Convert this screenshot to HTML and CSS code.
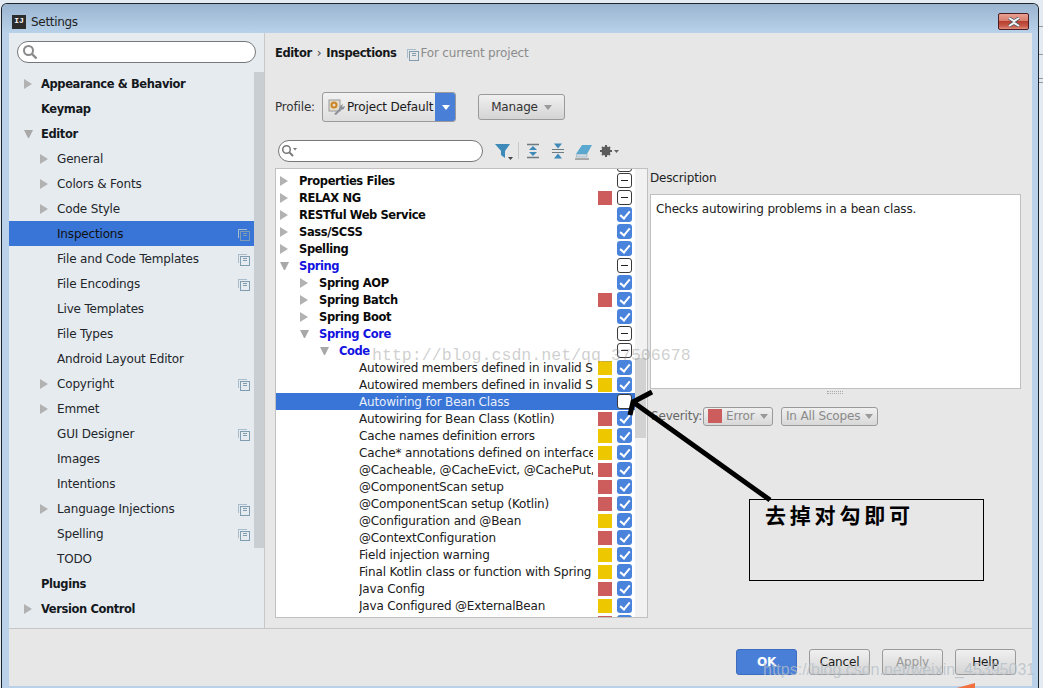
FILE: index.html
```html
<!DOCTYPE html>
<html lang="en">
<head>
  <meta charset="UTF-8">
  <meta name="viewport" content="width=device-width, initial-scale=1.0">
  <title>Settings</title>
  <link rel="stylesheet" href="styles.css">
</head>
<body>
  <div class="window">
    <div class="titlebar">
      <span class="app-icon">IJ</span>
      <span class="title">Settings</span>
      <span class="close"><svg width="14" height="10" viewBox="0 0 14 10"><path d="M2 1l5 3.200L12 1M2 9l5-3.200L12 9" fill="none" stroke="#4a5660" stroke-width="3.400"/><path d="M2 1l5 3.200L12 1M2 9l5-3.200L12 9" fill="none" stroke="#f2f4f6" stroke-width="2"/></svg></span>
    </div>
    <div class="main">
      <aside class="sidebar">
        <div class="side-search">
          <svg class="mag" width="16" height="16" viewBox="0 0 16 16"><circle cx="6.500" cy="6.500" r="4.500" fill="none" stroke="#8a8a8a" stroke-width="2"/><path d="M10 10l4.500 4.500" stroke="#8a8a8a" stroke-width="2.400"/></svg>
        </div>
        <div class="side-body">
          <ul class="nav">
            <li class="nav-row top"><i class="arr right"></i>Appearance &amp; Behavior</li>
            <li class="nav-row top"><i class="arr none"></i>Keymap</li>
            <li class="nav-row top"><i class="arr down"></i>Editor</li>
            <li class="nav-row sub"><i class="arr right"></i>General</li>
            <li class="nav-row sub"><i class="arr right"></i>Colors &amp; Fonts</li>
            <li class="nav-row sub"><i class="arr right"></i>Code Style</li>
            <li class="nav-row sub selected"><i class="arr none"></i>Inspections<i class="copy"></i></li>
            <li class="nav-row sub"><i class="arr none"></i>File and Code Templates<i class="copy"></i></li>
            <li class="nav-row sub"><i class="arr none"></i>File Encodings<i class="copy"></i></li>
            <li class="nav-row sub"><i class="arr none"></i>Live Templates</li>
            <li class="nav-row sub"><i class="arr none"></i>File Types</li>
            <li class="nav-row sub"><i class="arr none"></i>Android Layout Editor</li>
            <li class="nav-row sub"><i class="arr right"></i>Copyright<i class="copy"></i></li>
            <li class="nav-row sub"><i class="arr right"></i>Emmet</li>
            <li class="nav-row sub"><i class="arr none"></i>GUI Designer<i class="copy"></i></li>
            <li class="nav-row sub"><i class="arr none"></i>Images</li>
            <li class="nav-row sub"><i class="arr none"></i>Intentions</li>
            <li class="nav-row sub"><i class="arr right"></i>Language Injections<i class="copy"></i></li>
            <li class="nav-row sub"><i class="arr none"></i>Spelling<i class="copy"></i></li>
            <li class="nav-row sub"><i class="arr none"></i>TODO</li>
            <li class="nav-row top"><i class="arr none"></i>Plugins</li>
            <li class="nav-row top"><i class="arr right"></i>Version Control</li>
          </ul>
          <div class="side-scroll"><div class="side-thumb"></div></div>
        </div>
      </aside>
      <section class="content">
        <div class="crumbs"><b>Editor</b><span class="sep">&rsaquo;</span><b>Inspections</b><i class="copy"></i><span class="scope">For current project</span></div>
        <div class="profile-row">
          <span class="profile-label">Profile:</span>
          <div class="profile-select">
            <svg width="18" height="18" viewBox="0 0 18 18"><rect x="1" y="2" width="11" height="11" fill="#e4dccc" stroke="#9a9a9a"/><circle cx="6" cy="7" r="2.500" fill="none" stroke="#cc8420" stroke-width="2"/><path d="M6 16l5-5 1-3 3-2-1 3 3-1-1 3-3 1-5 5z" fill="#8c9298"/></svg>
            <span class="profile-name">Project Default</span>
            <span class="profile-drop"><i class="tri white"></i></span>
          </div>
          <button class="btn manage">Manage<i class="tri gray"></i></button>
        </div>
        <div class="toolbar">
          <div class="insp-search">
            <svg width="16" height="14" viewBox="0 0 16 14"><circle cx="5.500" cy="5.500" r="3.800" fill="none" stroke="#777" stroke-width="1.500"/><path d="M8.400 8.400l3.600 3.600" stroke="#777" stroke-width="2"/><path d="M12 4h4l-2 2.500z" fill="#777"/></svg>
          </div>
          <svg class="tools" width="128" height="20" viewBox="0 0 128 20">
            <path d="M1 3h15l-5 7v7l-4-3v-4z" fill="#3d8ab8"/><path d="M14 16h5l-2.500 3z" fill="#444"/>
            <path d="M24.500 1v17" stroke="#c8c8c8"/>
            <path d="M33 3.500h12M33 16.500h12" stroke="#6a7a80" stroke-width="1.500"/><path d="M39 5l4 4h-8zM39 15l4-4h-8z" fill="#3d8ab8"/>
            <path d="M58 8.500h12M58 11.500h12" stroke="#6a7a80"/><path d="M64 7.500l4-5h-8zM64 12.500l4 5h-8z" fill="#3d8ab8"/>
            <path d="M82 13l6-9h10l-5 9z" fill="#5aa8d0"/><path d="M83 13h10v3H82z" fill="#d0dde4" stroke="#7a9cb0" stroke-width=".5"/><path d="M81 18h14" stroke="#666"/>
            <circle cx="112" cy="10" r="3" fill="none" stroke="#5c5c5c" stroke-width="3"/><path d="M112 4v12M106 10h12M108 6l8 8M116 6l-8 8" stroke="#5c5c5c" stroke-width="2"/><path d="M120 9h5l-2.500 3z" fill="#666"/>
          </svg>
        </div>
        <div class="panes">
          <div class="tree-box">
            <div class="tree-clip">
              <div class="tree-stub"><span class="spacer"></span><span class="box mixed"></span></div>
              <div class="t-row group l0"><i class="arr right"></i><span class="t-name">Properties Files</span><span class="sev"></span><span class="box mixed"></span></div>
              <div class="t-row group l0"><i class="arr right"></i><span class="t-name">RELAX NG</span><span class="sev red"></span><span class="box mixed"></span></div>
              <div class="t-row group l0"><i class="arr right"></i><span class="t-name">RESTful Web Service</span><span class="sev"></span><span class="box on"></span></div>
              <div class="t-row group l0"><i class="arr right"></i><span class="t-name">Sass/SCSS</span><span class="sev"></span><span class="box on"></span></div>
              <div class="t-row group l0"><i class="arr right"></i><span class="t-name">Spelling</span><span class="sev"></span><span class="box on"></span></div>
              <div class="t-row group l0 link"><i class="arr down"></i><span class="t-name">Spring</span><span class="sev"></span><span class="box mixed"></span></div>
              <div class="t-row group l1"><i class="arr right"></i><span class="t-name">Spring AOP</span><span class="sev"></span><span class="box on"></span></div>
              <div class="t-row group l1"><i class="arr right"></i><span class="t-name">Spring Batch</span><span class="sev red"></span><span class="box on"></span></div>
              <div class="t-row group l1"><i class="arr right"></i><span class="t-name">Spring Boot</span><span class="sev"></span><span class="box on"></span></div>
              <div class="t-row group l1 link"><i class="arr down"></i><span class="t-name">Spring Core</span><span class="sev"></span><span class="box mixed"></span></div>
              <div class="t-row group l2 link"><i class="arr down"></i><span class="t-name">Code</span><span class="sev"></span><span class="box mixed"></span></div>
              <div class="t-row l3"><span class="t-name">Autowired members defined in invalid Spring Bean</span><span class="sev yellow"></span><span class="box on"></span></div>
              <div class="t-row l3"><span class="t-name">Autowired members defined in invalid Spring Bean</span><span class="sev yellow"></span><span class="box on"></span></div>
              <div class="t-row l3 picked"><span class="t-name">Autowiring for Bean Class</span><span class="sev"></span><span class="box off"></span></div>
              <div class="t-row l3"><span class="t-name">Autowiring for Bean Class (Kotlin)</span><span class="sev red"></span><span class="box on"></span></div>
              <div class="t-row l3"><span class="t-name">Cache names definition errors</span><span class="sev yellow"></span><span class="box on"></span></div>
              <div class="t-row l3"><span class="t-name">Cache* annotations defined on interfaces and methods</span><span class="sev yellow"></span><span class="box on"></span></div>
              <div class="t-row l3"><span class="t-name">@Cacheable, @CacheEvict, @CachePut, @Caching</span><span class="sev red"></span><span class="box on"></span></div>
              <div class="t-row l3"><span class="t-name">@ComponentScan setup</span><span class="sev red"></span><span class="box on"></span></div>
              <div class="t-row l3"><span class="t-name">@ComponentScan setup (Kotlin)</span><span class="sev red"></span><span class="box on"></span></div>
              <div class="t-row l3"><span class="t-name">@Configuration and @Bean</span><span class="sev yellow"></span><span class="box on"></span></div>
              <div class="t-row l3"><span class="t-name">@ContextConfiguration</span><span class="sev red"></span><span class="box on"></span></div>
              <div class="t-row l3"><span class="t-name">Field injection warning</span><span class="sev yellow"></span><span class="box on"></span></div>
              <div class="t-row l3"><span class="t-name">Final Kotlin class or function with Spring</span><span class="sev yellow"></span><span class="box on"></span></div>
              <div class="t-row l3"><span class="t-name">Java Config</span><span class="sev red"></span><span class="box on"></span></div>
              <div class="t-row l3"><span class="t-name">Java Configured @ExternalBean</span><span class="sev yellow"></span><span class="box on"></span></div>
              <div class="t-row l3"><span class="t-name"></span><span class="sev red"></span><span class="box on"></span></div>
            </div>
            <div class="tree-scroll"><div class="tree-thumb"></div></div>
          </div>
          <div class="details">
            <div class="desc-label">Description</div>
            <div class="desc-box">Checks autowiring problems in a bean class.</div>
            <div class="grip"></div>
            <div class="severity-row">
              <span class="sev-label">Severity:</span>
              <span class="combo combo-error"><i class="sev-chip"></i>Error<i class="tri gray"></i></span>
              <span class="combo combo-scope">In All Scopes<i class="tri gray"></i></span>
            </div>
            <div class="note">去掉对勾即可</div>
          </div>
        </div>
      </section>
    </div>
    <div class="footer">
      <button class="btn primary">OK</button>
      <button class="btn">Cancel</button>
      <button class="btn disabled">Apply</button>
      <button class="btn">Help</button>
    </div>
  </div>
  <svg class="arrow" width="150" height="118" viewBox="0 0 150 118"><path d="M145 112L8 14M27 4L8 14L5 27" fill="none" stroke="#000" stroke-width="5"/></svg>
  <div class="mark-a">http://blog.csdn.net/qq_37506678</div>
  <div class="mark-b">https://blog.csdn.net/weixin_45395031</div>
  <div class="orange"></div>
</body>
</html>
```

FILE: styles.css
```css
* {
  box-sizing: border-box;
}
html, body {
  height: 100%;
}
body {
  margin: 0;
  padding: 3px 4px 0 1px;
  background:
    linear-gradient(#999, #999) right 0 top 26px / 4px 1px no-repeat,
    linear-gradient(#999, #999) right 0 top 54px / 4px 1px no-repeat,
    linear-gradient(#999, #999) right 0 top 78px / 4px 1px no-repeat,
    linear-gradient(#999, #999) right 0 top 82px / 4px 1px no-repeat,
    #e4ebf2;
  font-family: "DejaVu Sans", sans-serif;
  font-size: 12px;
  letter-spacing: -0.17px;
  color: #1a1a1a;
  overflow: hidden;
  position: relative;
}
ul {
  list-style: none;
  margin: 0;
  padding: 0;
}
button {
  font: inherit;
  letter-spacing: inherit;
}
.window {
  height: 688px;
  border: 1px solid #1c2226;
  border-bottom: 0;
  border-radius: 6px 6px 0 0;
  background: #b9d2ea;
  padding: 0 6px 5px 7px;
  display: flex;
  flex-direction: column;
}
.titlebar {
  height: 29px;
  margin: 0 -6px 0 -7px;
  padding: 6px 9px 0 10px;
  display: flex;
  align-items: center;
  flex: none;
  background: linear-gradient(#9ab4d0, #b9d2ea);
  border-radius: 5px 5px 0 0;
}
.app-icon {
  width: 14px;
  height: 14px;
  background: #2c2c2c;
  color: #fff;
  font: bold 8px/11px "Liberation Mono", monospace;
  letter-spacing: 0;
  text-align: center;
  margin-right: 5px;
  flex: none;
}
.title {
  flex: 1;
  letter-spacing: -0.3px;
  color: #222;
}
.close {
  width: 31px;
  height: 17px;
  border: 1px solid #4a1c24;
  border-radius: 2px;
  display: flex;
  align-items: center;
  justify-content: center;
  background: linear-gradient(#e8a090 0, #d88070 45%, #b84030 50%, #c85848 80%, #e09080 100%);
}
.main {
  flex: 1;
  min-height: 0;
  display: flex;
  border-bottom: 1px solid #c6c6c6;
}
.sidebar {
  width: 256px;
  flex: none;
  background: #e6ebf0;
  border-right: 1px solid #c6c8ca;
  display: flex;
  flex-direction: column;
}
.side-search {
  height: 22px;
  margin: 8px;
  flex: none;
  background: #fff;
  border: 1px solid #777;
  border-radius: 11px;
  padding: 2px 4px;
}
.side-search .mag {
  display: block;
}
.side-body {
  flex: 1;
  min-height: 0;
  display: flex;
}
.nav {
  flex: 1;
}
.nav-row {
  height: 25px;
  display: flex;
  align-items: center;
  white-space: nowrap;
  color: #22262a;
}
.nav-row.top {
  font-size: 11.500px;
  font-weight: bold;
  letter-spacing: -0.4px;
  color: #14181c;
  padding-left: 15px;
}
.nav-row.sub {
  padding-left: 31px;
}
.nav-row.selected {
  background: #3875d7;
  color: #111;
}
.nav-row .copy {
  margin-left: auto;
  margin-right: 7px;
}
.arr {
  width: 17px;
  flex: none;
  height: 0;
  display: block;
}
.arr.right {
  border-left: 8px solid #b2b2b2;
  border-top: 5px solid transparent;
  border-bottom: 5px solid transparent;
  border-right: 9px solid transparent;
}
.arr.down {
  border-top: 8px solid #a8a8a8;
  border-left: 4.500px solid transparent;
  border-right: 4.500px solid transparent;
  width: 9px;
  margin-right: 8px;
}
.copy {
  width: 9px;
  height: 9px;
  flex: none;
  display: block;
  position: relative;
  border: solid #a8bccb;
  border-width: 1px 0 0 1px;
}
.copy::after {
  content: "";
  position: absolute;
  left: 1px;
  top: 1px;
  width: 8px;
  height: 8px;
  border: 1px solid #7f9cb0;
  background: linear-gradient(#7f9cb0, #7f9cb0) center 1px / 4px 1px no-repeat,
    linear-gradient(#7f9cb0, #7f9cb0) center 3px / 4px 1px no-repeat;
}
.side-scroll {
  width: 10px;
  flex: none;
}
.side-thumb {
  height: 476px;
  margin-top: 1px;
  background: #c9ced2;
}
.content {
  flex: 1;
  min-width: 0;
  background: #e7e7e7;
  padding: 10px 10px 0;
  display: flex;
  flex-direction: column;
}
.crumbs {
  height: 20px;
  display: flex;
  align-items: center;
}
.crumbs b {
  font-size: 11.500px;
  letter-spacing: -0.4px;
  color: #16181a;
}
.crumbs .sep {
  margin: 0 5px;
  color: #444;
}
.crumbs .copy {
  margin: 0 4px 0 11px;
}
.scope {
  color: #8c8c8c;
}
.profile-row {
  margin-top: 29px;
  height: 30px;
  display: flex;
  align-items: center;
  color: #333;
}
.profile-label {
  width: 47px;
  flex: none;
}
.profile-select {
  width: 134px;
  height: 30px;
  border: 1px solid #9a9a9a;
  border-radius: 3px;
  background: linear-gradient(#f2f2f2, #dedede);
  display: flex;
  align-items: center;
  padding-left: 5px;
  overflow: hidden;
}
.profile-name {
  flex: 1;
  margin-left: 1px;
  white-space: nowrap;
  color: #1a1a1a;
}
.profile-drop {
  width: 21px;
  height: 30px;
  margin-right: -1px;
  background: #4a7fd8;
  display: flex;
  align-items: center;
  justify-content: center;
}
.tri {
  display: block;
  width: 0;
  height: 0;
  border-left: 4px solid transparent;
  border-right: 4px solid transparent;
  border-top: 5px solid #999;
}
.tri.white {
  border-top-color: #fff;
}
.btn {
  height: 26px;
  width: 61px;
  border: 1px solid #9a9a9a;
  border-radius: 3px;
  background: linear-gradient(#f0f0f0, #d4d4d4);
  color: #1a1a1a;
  padding: 0;
  display: flex;
  align-items: center;
  justify-content: center;
}
.manage {
  width: 87px;
  margin-left: 22px;
  gap: 6px;
  color: #333;
}
.toolbar {
  margin-top: 17px;
  margin-left: 3px;
  height: 23px;
  display: flex;
  align-items: center;
}
.insp-search {
  width: 205px;
  height: 22px;
  background: #fff;
  border: 1px solid #777;
  border-radius: 11px;
  padding: 3px 2px;
  display: flex;
}
.tools {
  margin-left: 11px;
}
.panes {
  margin-top: 6px;
  display: flex;
  align-items: flex-start;
}
.tree-box {
  width: 373px;
  height: 450px;
  flex: none;
  border: 1px solid #c0c0c0;
  background: #fff;
  display: flex;
  overflow: hidden;
}
.tree-clip {
  flex: 1;
  min-width: 0;
  overflow: hidden;
}
.tree-stub {
  height: 3px;
  overflow: hidden;
  display: flex;
  justify-content: flex-end;
  align-items: flex-end;
  padding-right: 3px;
}
.t-row {
  height: 17px;
  display: flex;
  align-items: center;
  white-space: nowrap;
  padding-right: 3px;
  color: #202020;
}
.t-row .arr {
  margin-right: 2px;
}
.t-row .arr.down {
  margin-right: 10px;
}
.t-row.l0 {
  padding-left: 4px;
}
.t-row.l1 {
  padding-left: 24px;
}
.t-row.l2 {
  padding-left: 44px;
}
.t-row.l3 {
  padding-left: 83px;
}
.t-row.group .t-name {
  font-size: 11.500px;
  font-weight: bold;
  letter-spacing: -0.4px;
  color: #0a0a0a;
}
.t-row.link .t-name {
  color: #1212e0;
}
.t-row.picked {
  background: #3875d7;
}
.t-row.picked .t-name {
  color: #e8eefa;
}
.t-name {
  flex: 1;
  min-width: 0;
  overflow: hidden;
}
.sev {
  width: 14px;
  height: 14px;
  flex: none;
  margin: 0 5px;
}
.sev.red {
  background: #cd5c5c;
}
.sev.yellow {
  background: #edc700;
}
.box {
  width: 15px;
  height: 15px;
  flex: none;
  border-radius: 3px;
  display: block;
  position: relative;
}
.box.mixed {
  background: #fff;
  border: 1px solid #3a3a3a;
}
.box.mixed::after {
  content: "";
  position: absolute;
  left: 3px;
  top: 6px;
  width: 7px;
  height: 1px;
  background: #222;
}
.box.on {
  background: #4a83dc;
}
.box.on::after {
  content: "";
  position: absolute;
  left: 5px;
  top: 2px;
  width: 4px;
  height: 8px;
  border: solid #fff;
  border-width: 0 2px 2px 0;
  transform: rotate(40deg);
}
.box.off {
  background: #fff;
  border: 1px solid #3a3a3a;
}
.spacer {
  flex: 1;
}
.tree-scroll {
  width: 12px;
  flex: none;
  background: #f2f2f2;
  padding-top: 189px;
}
.tree-thumb {
  width: 11px;
  height: 80px;
  background: #d2d2d2;
}
.details {
  flex: 1;
  min-width: 0;
  margin-left: 2px;
  position: relative;
}
.desc-label {
  height: 26px;
  padding-top: 2px;
  line-height: 16px;
  color: #222;
}
.desc-box {
  width: 371px;
  height: 195px;
  background: #fff;
  border: 1px solid #c0c0c0;
  padding: 6px 5px;
  line-height: 16px;
  color: #222;
}
.grip {
  width: 16px;
  height: 3px;
  margin: 2px 0 0 177px;
  border-top: 1px dotted #aaa;
  border-bottom: 1px dotted #aaa;
}
.severity-row {
  margin-top: 12px;
  height: 20px;
  display: flex;
  align-items: center;
  color: #666;
}
.sev-label {
  width: 53px;
  flex: none;
  padding-left: 1px;
}
.combo {
  height: 19px;
  flex: none;
  border: 1px solid #9a9a9a;
  border-radius: 3px;
  background: linear-gradient(#f0f0f0, #d8d8d8);
  display: flex;
  align-items: center;
  padding: 0 4px;
  margin-right: 8px;
  gap: 4px;
  color: #8a8a8a;
}
.combo .tri {
  margin-left: auto;
}
.combo-error {
  width: 70px;
}
.combo-scope {
  width: 97px;
}
.sev-chip {
  width: 14px;
  height: 14px;
  background: #cd5c5c;
  display: block;
}
/* drawn on top of the screenshot, so it floats */
.note {
  position: absolute;
  left: 99px;
  top: 331px;
  width: 235px;
  height: 82px;
  border: 1px solid #000;
  background: #e7e7e7;
  padding: 0 15px;
  font: bold 21px/29px "Noto Sans CJK SC", sans-serif;
  letter-spacing: 3.800px;
  color: #000;
}
.footer {
  height: 57px;
  flex: none;
  background: #e7e7e7;
  display: flex;
  justify-content: flex-end;
  align-items: flex-start;
  gap: 12px;
  padding: 20px 16px 0 0;
}
.btn.primary {
  background: #4a7fd8;
  border-color: #3c6cc0;
  color: #fff;
  font-weight: bold;
}
.btn.disabled {
  color: #999;
}
.arrow {
  position: absolute;
  left: 625px;
  top: 388px;
}
.mark-a {
  position: absolute;
  left: 372px;
  top: 346px;
  font: 16.600px/20px "Liberation Mono", monospace;
  letter-spacing: 0;
  color: rgba(140, 140, 140, 0.42);
  white-space: nowrap;
}
.mark-b {
  position: absolute;
  left: 763px;
  top: 661px;
  font: 16px/18px "Liberation Sans", sans-serif;
  letter-spacing: 0;
  color: rgba(180, 190, 200, 0.75);
  white-space: nowrap;
}
.orange {
  position: absolute;
  left: 953px;
  top: 683px;
  width: 22px;
  height: 6px;
  background: #f07040;
  clip-path: polygon(0 100%, 100% 0, 100% 100%);
}
```
